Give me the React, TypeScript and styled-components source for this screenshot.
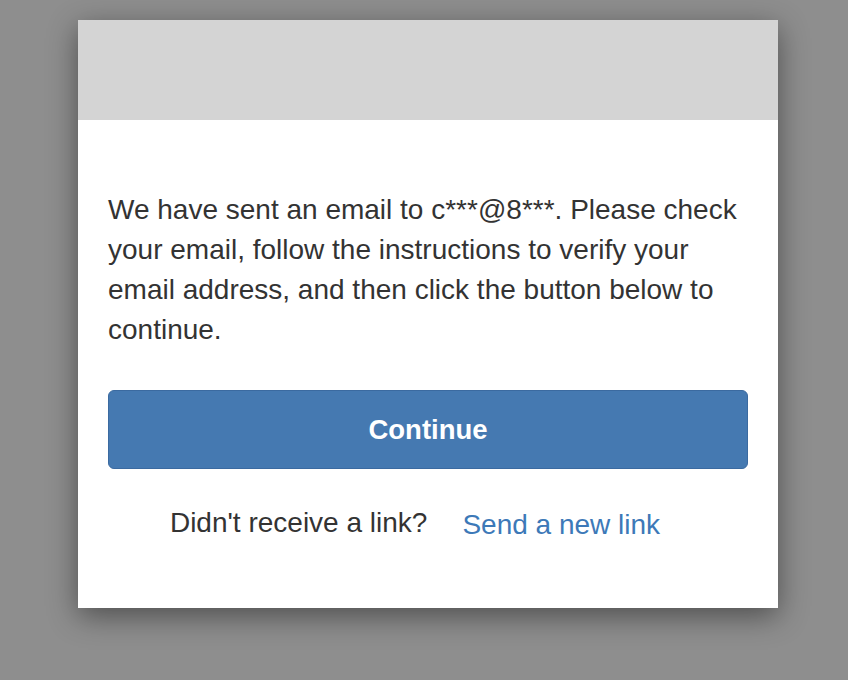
import React from "react";
import styled, { createGlobalStyle } from "styled-components";

const Global = createGlobalStyle`
  html, body { margin: 0; padding: 0; }
  body {
    background: #8e8e8e;
    font-family: "Liberation Sans", Arial, sans-serif;
    width: 848px;
    height: 680px;
    overflow: hidden;
  }
`;

const Page = styled.div`
  padding: 20px 0 0 78px;
`;

const Card = styled.div`
  width: 700px;
  height: 588px;
  background: #ffffff;
  box-shadow: 0 8px 28px rgba(0, 0, 0, 0.45);
  display: flex;
  flex-direction: column;
`;

const Header = styled.div`
  height: 100px;
  background: #d4d4d4;
`;

const Body = styled.div`
  padding: 70px 30px 0 30px;
  display: flex;
  flex-direction: column;
`;

const Message = styled.p`
  margin: 0;
  font-size: 28px;
  line-height: 40px;
  color: #333333;
`;

const PrimaryButton = styled.button`
  margin-top: 40px;
  height: 79px;
  width: 100%;
  background: #4579b1;
  border: 1px solid #3b6aa0;
  border-radius: 6px;
  color: #ffffff;
  font-family: "Liberation Sans", Arial, sans-serif;
  font-weight: 700;
  font-size: 27.5px;
  cursor: pointer;
`;

const ResendRow = styled.div`
  margin-top: 38px;
  display: flex;
  justify-content: center;
  align-items: baseline;
  gap: 35px;
  padding-right: 26px;
  font-size: 28px;
`;

const Prompt = styled.span`
  color: #333333;
`;

const ResendLink = styled.a`
  color: #3d79b8;
  text-decoration: none;
  position: relative;
  top: 2px;
  cursor: pointer;
`;

export default function App() {
  return (
    <>
      <Global />
      <Page>
        <Card>
          <Header />
          <Body>
            <Message>
              We have sent an email to c***@8***. Please check your email, follow the
              instructions to verify your email address, and then click the button below
              to continue.
            </Message>
            <PrimaryButton>Continue</PrimaryButton>
            <ResendRow>
              <Prompt>Didn't receive a link?</Prompt>
              <ResendLink>Send a new link</ResendLink>
            </ResendRow>
          </Body>
        </Card>
      </Page>
    </>
  );
}
